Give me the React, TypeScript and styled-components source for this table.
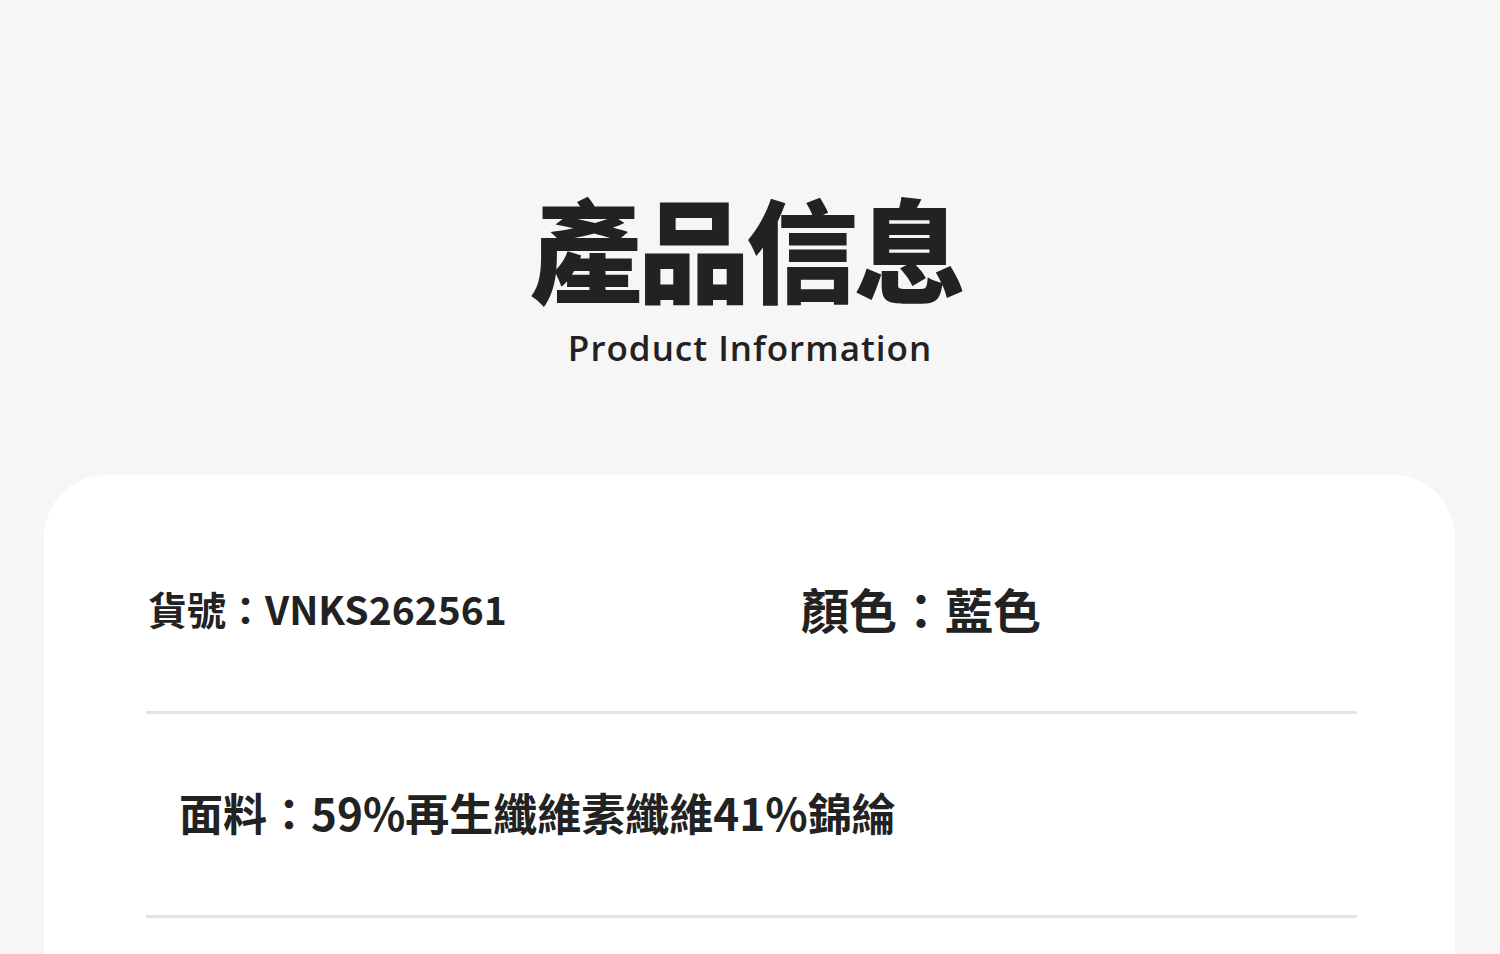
import React from "react";
import styled, { createGlobalStyle } from "styled-components";

const Global = createGlobalStyle`
  html, body { margin: 0; padding: 0; background: #f6f6f6; }
  body { font-family: "Noto Sans CJK TC", "Noto Sans", sans-serif; color: #222; }
  * { box-sizing: border-box; }
`;

const Page = styled.div`
  width: 1500px;
  height: 954px;
  overflow: hidden;
  display: flex;
  flex-direction: column;
  align-items: center;
`;

const Header = styled.header`
  display: flex;
  flex-direction: column;
  align-items: center;
  padding-top: 165px;
  height: 295px;
  width: 100%;
`;

const Title = styled.h1`
  margin: 0 8px 0 0;
  font-family: "Noto Sans CJK TC", sans-serif;
  font-weight: 900;
  font-size: 112px;
  line-height: 162px;
  letter-spacing: -4px;
  color: #222;
`;

const Subtitle = styled.p`
  margin: 1px 0 0;
  font-family: "Open Sans", "Lato", sans-serif;
  font-weight: 600;
  font-size: 35px;
  line-height: 40px;
  letter-spacing: 1px;
  color: #222;
`;

const Card = styled.section`
  align-self: stretch;
  margin: 180px 45px 0 44px;
  flex: 1;
  background: #fff;
  border-radius: 62px 62px 0 0;
  padding: 0 98px 0 102px;
`;

const Row = styled.div<{ $height: number; $padTop?: number; $padBottom?: number }>`
  height: ${(p) => p.$height}px;
  padding-top: ${(p) => p.$padTop ?? 0}px;
  padding-bottom: ${(p) => p.$padBottom ?? 0}px;
  display: flex;
  align-items: center;
  border-bottom: 3px solid #e3e3e3;
`;

const Field = styled.div<{ $size: number; $indent: number; $width?: number }>`
  padding-left: ${(p) => p.$indent}px;
  width: ${(p) => (p.$width ? `${p.$width}px` : "auto")};
  font-size: ${(p) => p.$size}px;
  font-weight: 700;
  color: #222;
  white-space: nowrap;
  line-height: 1;
`;

export default function App() {
  return (
    <Page>
      <Global />
      <Header>
        <Title>產品信息</Title>
        <Subtitle>Product Information</Subtitle>
      </Header>
      <Card>
        <Row $height={239} $padTop={30}>
          <Field $size={39} $indent={2} $width={655}>貨號：VNKS262561</Field>
          <Field $size={48} $indent={0}>顏色：藍色</Field>
        </Row>
        <Row $height={204} $padBottom={5}>
          <Field $size={44} $indent={33}>面料：59%再生纖維素纖維41%錦綸</Field>
        </Row>
      </Card>
    </Page>
  );
}
